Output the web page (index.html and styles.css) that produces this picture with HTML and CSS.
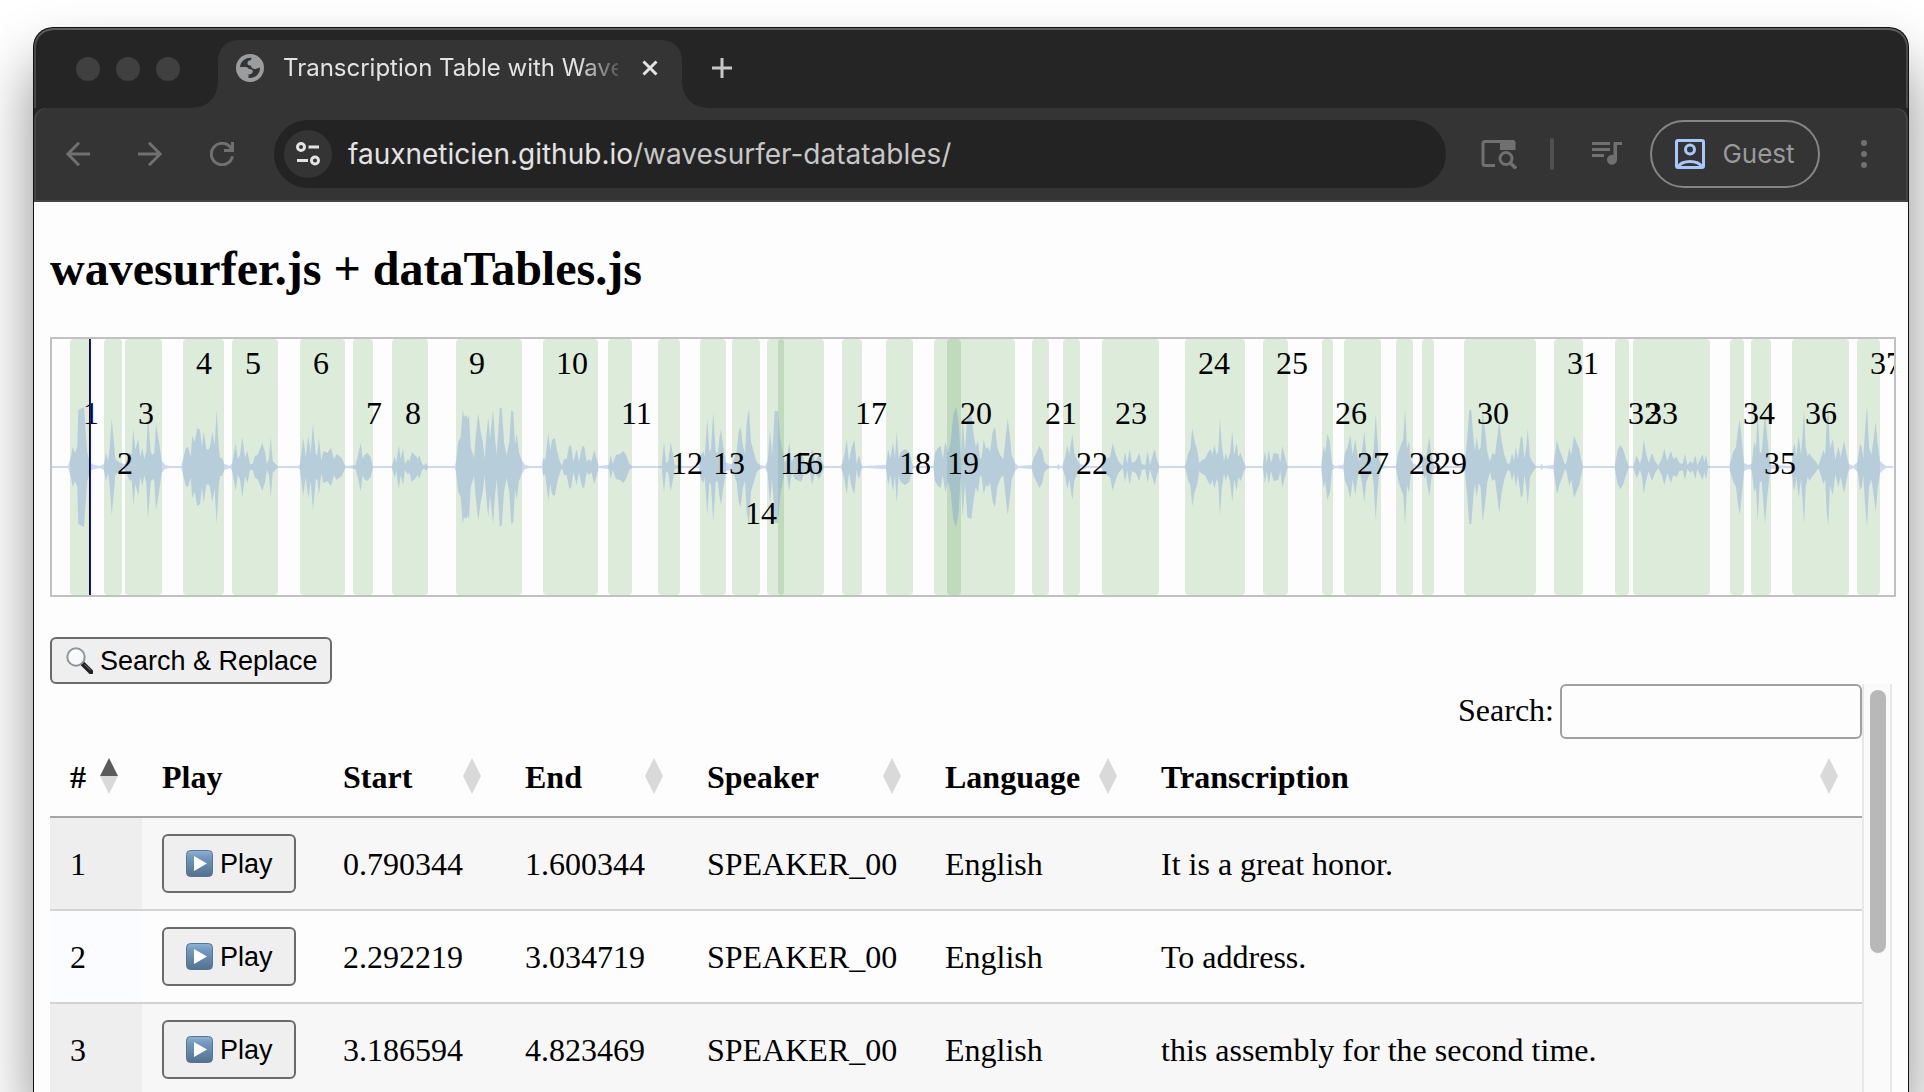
FILE: index.html
```html
<!DOCTYPE html>
<html lang="en">
<head>
<meta charset="utf-8">
<title>Transcription Table with Wavesurfer</title>
<link rel="stylesheet" href="styles.css">
</head>
<body>
<svg class="defs" width="0" height="0" aria-hidden="true">
  <defs>
    <linearGradient id="key-blue" x1="0" y1="0" x2="0" y2="1">
      <stop offset="0" stop-color="#8fb3d8"/><stop offset=".25" stop-color="#7399c0"/><stop offset="1" stop-color="#52718f"/>
    </linearGradient>
    <symbol id="play-key" viewBox="0 0 27 27">
      <rect x=".5" y=".5" width="26" height="26" rx="4" fill="url(#key-blue)" stroke="#5b7590"/>
      <path d="M8 6L21 13.500L8 21z" fill="#fff"/>
    </symbol>
  </defs>
</svg>
<div class="window">
  <header class="tab-strip">
    <span class="lights"><i></i><i></i><i></i></span>
    <div class="tab">
      <svg class="globe" viewBox="0 0 28 28"><circle cx="14" cy="14" r="14" fill="#9a9c9e"/><path fill="#343434" d="M4 13A10.200 10.200 0 0 1 15.500 3.800L15 6Q11.300 6.500 11.500 9.500Q11.600 11.500 15 11.800Q16 15.500 19.500 15L24 13.500A10.200 10.200 0 0 1 12.500 24V20.500Q16.800 20.300 16.800 17.300Q16.600 15 13 15Q12 13 9.500 13z"/></svg>
      <span class="tab-title">Transcription Table with Wavesurfer</span>
      <button class="icon-button close" aria-label="Close tab"><svg viewBox="0 0 16 16"><path d="M1.500 1.500L14.500 14.500M14.500 1.500L1.500 14.500"/></svg></button>
    </div>
    <button class="icon-button new-tab" aria-label="New tab"><svg viewBox="0 0 20 20"><path d="M10 0V20M0 10H20"/></svg></button>
  </header>
  <nav class="toolbar">
    <div class="nav-buttons">
      <button class="icon-button nav" aria-label="Back"><svg viewBox="0 0 24 24"><path d="M24 12H2M13 .8L1.800 12L13 23.200"/></svg></button>
      <button class="icon-button nav" aria-label="Forward"><svg viewBox="0 0 24 24"><path d="M0 12H22M11 .8L22.200 12L11 23.200"/></svg></button>
      <button class="icon-button nav" aria-label="Reload"><svg viewBox="0 0 24 24"><path d="M22.500 14.200A10.700 10.700 0 1 1 20.500 5.500L22 8M22.500 0V8.500H14"/></svg></button>
    </div>
    <div class="omnibox">
      <button class="site-info" aria-label="Site information"><svg viewBox="0 0 24 24"><g fill="none" stroke="#e3e3e3" stroke-width="3"><circle cx="5" cy="5" r="3.500"/><circle cx="19" cy="18.500" r="3.500"/><path d="M12.500 5H23M1 18.500H12"/></g></svg></button>
      <div class="url">fauxneticien.github.io<span>/wavesurfer-datatables/</span></div>
    </div>
    <button class="icon-button tab-search" aria-label="Search this page"><svg viewBox="0 0 36 30"><path fill="none" stroke="currentColor" stroke-width="3" d="M14 26.500H4Q2 26.500 2 24.500V4.500Q2 2.500 4 2.500H31Q33 2.500 33 4.500"/><path fill="currentColor" d="M19 1h12.500q3 0 3 3v7H19z"/><circle cx="25" cy="19.500" r="6" fill="none" stroke="currentColor" stroke-width="3"/><path stroke="currentColor" stroke-width="3.500" d="M29 23.500L35 29.500"/></svg></button>
    <span class="divider"></span>
    <button class="icon-button music" aria-label="Media controls"><svg viewBox="0 0 30 24"><path fill="currentColor" d="M0 0h18v3H0zM0 6h18v3H0zM0 12h12v3H0zM21.500 0H30v3h-5v14.500A5 5 0 1 1 21.500 12.900z"/></svg></button>
    <button class="guest"><svg viewBox="0 0 30 30"><g fill="none" stroke="#a8c7fa" stroke-width="3"><rect x="1.500" y="1.500" width="27" height="27" rx="1.500"/><circle cx="15" cy="10.500" r="4.500"/><path d="M3 28Q6 22.500 15 22.500T27 28"/></g></svg><span>Guest</span></button>
    <button class="icon-button dots" aria-label="Menu"><svg viewBox="0 0 6 28"><g fill="currentColor"><circle cx="3" cy="3" r="3"/><circle cx="3" cy="14" r="3"/><circle cx="3" cy="25" r="3"/></g></svg></button>
  </nav>
  <main>
    <h1>wavesurfer.js + dataTables.js</h1>
    <div class="waveform" id="waveform">
      <svg class="wave" viewBox="0 0 1842 256" preserveAspectRatio="none" aria-hidden="true"><path id="wave-path"/></svg>
      <div class="cursor"></div>
    </div>
    <button class="replace"><svg viewBox="0 0 27 27"><path d="M17 17L25 25" stroke="#222" stroke-width="5" stroke-linecap="round"/><path d="M18.500 17.500L24.500 23" stroke="#777" stroke-width="1"/><circle cx="10" cy="10" r="8.700" fill="#f7f8fa" stroke="#8f959c" stroke-width="2"/><path d="M5 8Q7 4.500 11 4.500" fill="none" stroke="#fff" stroke-width="2"/></svg>Search &amp; Replace</button>
    <section class="scroll-area">
      <div class="table-pane">
        <div class="filter"><label for="search">Search:</label><input id="search" type="search"></div>
        <table>
          <colgroup><col class="c-num"><col class="c-play"><col class="c-time"><col class="c-time"><col class="c-speaker"><col class="c-lang"><col></colgroup>
          <thead>
            <tr><th class="sort asc">#</th><th>Play</th><th class="sort">Start</th><th class="sort">End</th><th class="sort">Speaker</th><th class="sort">Language</th><th class="sort">Transcription</th></tr>
          </thead>
          <tbody>
            <tr><td>1</td><td><button class="play"><svg><use href="#play-key"/></svg>Play</button></td><td>0.790344</td><td>1.600344</td><td>SPEAKER_00</td><td>English</td><td>It is a great honor.</td></tr>
            <tr><td>2</td><td><button class="play"><svg><use href="#play-key"/></svg>Play</button></td><td>2.292219</td><td>3.034719</td><td>SPEAKER_00</td><td>English</td><td>To address.</td></tr>
            <tr><td>3</td><td><button class="play"><svg><use href="#play-key"/></svg>Play</button></td><td>3.186594</td><td>4.823469</td><td>SPEAKER_00</td><td>English</td><td>this assembly for the second time.</td></tr>
          </tbody>
        </table>
      </div>
      <div class="scrollbar"><div class="thumb"></div></div>
    </section>
  </main>
</div>
<script src="wave.js"></script>
</body>
</html>
```
FILE: styles.css
```css
* { box-sizing: border-box; }

body {
  margin: 0;
  height: 100vh;
  overflow: hidden;
  display: flex;
  background: #fff;
  color: #000;
  font: 32px/36px "Liberation Serif", "Times New Roman", serif;
}

button {
  font: 27px/32px "Liberation Sans", Arial, sans-serif;
  color: #000;
  padding: 0;
}

svg { display: block; flex: none; }
.defs { position: absolute; }

.window {
  flex: 1;
  min-width: 0;
  margin: 27px 15px 0 33px;
  border: 1px solid #111;
  border-bottom: 0;
  border-radius: 20px 20px 0 0;
  overflow: hidden;
  background: linear-gradient(#252525 160px, #fdfdfd 160px);
  box-shadow: 0 36px 60px rgba(0, 0, 0, .45);
}

/* Browser chrome */
.tab-strip {
  height: 80px;
  display: flex;
  align-items: flex-end;
  padding-left: 42px;
  background: #252525;
  border-radius: 20px 20px 0 0;
  box-shadow: inset 0 2px #5e5e5e, inset 2px 0 #484848, inset -2px 0 #484848;
}

.lights {
  display: flex;
  gap: 16px;
  margin: 0 38px 27px 0;
}

.lights i {
  width: 24px;
  height: 24px;
  border-radius: 50%;
  background: #404040;
}

.tab {
  position: relative;
  width: 464px;
  height: 68px;
  display: flex;
  align-items: center;
  padding: 0 24px 12px 18px;
  background: #343434;
  border-radius: 20px 20px 0 0;
}

.tab::before,
.tab::after {
  content: "";
  position: absolute;
  bottom: 0;
  width: 24px;
  height: 24px;
}

.tab::before {
  right: 100%;
  background: radial-gradient(circle at 0 0, transparent 23px, #343434 24px);
}

.tab::after {
  left: 100%;
  background: radial-gradient(circle at 100% 0, transparent 23px, #343434 24px);
}

.globe {
  width: 28px;
  height: 28px;
}

.tab-title {
  flex: 1;
  margin: 0 24px 0 19px;
  overflow: hidden;
  white-space: nowrap;
  font: 24px/32px Inter, sans-serif;
  color: #e3e3e3;
  -webkit-mask-image: linear-gradient(90deg, #000 296px, transparent 344px);
  mask-image: linear-gradient(90deg, #000 296px, transparent 344px);
}

.icon-button {
  border: 0;
  background: none;
  color: #707070;
  flex: none;
}

.close svg,
.new-tab svg,
.nav svg {
  fill: none;
  stroke: #e3e3e3;
  stroke-width: 3;
}

.close svg { width: 16px; height: 16px; }
.new-tab { margin: 0 0 30px 30px; }
.new-tab svg { width: 20px; height: 20px; stroke: #c7c7c7; }
.nav svg { width: 24px; height: 24px; stroke: #707070; }

.toolbar {
  height: 94px;
  display: flex;
  align-items: center;
  padding: 0 41px 0 32px;
  background: #343434;
  border-bottom: 2px solid #444;
  border-radius: 12px 12px 0 0;
  box-shadow: inset 2px 0 #444, inset -2px 0 #444;
}

.nav-buttons {
  display: flex;
  gap: 48px;
}

.omnibox {
  flex: 1;
  min-width: 0;
  height: 68px;
  margin: 0 35px 0 40px;
  padding: 0 10px;
  display: flex;
  align-items: center;
  gap: 16px;
  border-radius: 34px;
  background: #232323;
}

.site-info {
  width: 48px;
  height: 48px;
  display: grid;
  place-items: center;
  border: 0;
  border-radius: 50%;
  background: #343434;
}

.site-info svg { width: 24px; height: 24px; }

.url {
  font: 28px/36px Inter, sans-serif;
  color: #e3e3e3;
  white-space: nowrap;
}

.url span { color: #c7c7c7; }

.tab-search svg { width: 36px; height: 30px; }

.divider {
  width: 4px;
  height: 32px;
  margin: 0 38px 0 33px;
  border-radius: 2px;
  background: #505050;
}

.music svg { width: 30px; height: 24px; }

.guest {
  width: 170px;
  height: 68px;
  margin: 0 41px 0 28px;
  display: flex;
  align-items: center;
  justify-content: center;
  gap: 17px;
  border: 2px solid #858585;
  border-radius: 34px;
  background: none;
  color: #9a9a9a;
  font: 26px/32px Inter, sans-serif;
}

.guest svg { width: 30px; height: 30px; }
.dots svg { width: 6px; height: 28px; }

/* Page */
main {
  padding: 39px 16px 0;
  background: #fdfdfd;
}

h1 {
  margin: 0 0 40px;
  font-size: 48px;
  line-height: 56px;
}

.waveform {
  position: relative;
  height: 260px;
  margin-right: -4px;
  margin-bottom: 40px;
  border: 2px solid #c1c1c1;
  overflow: hidden;
}

.region {
  position: absolute;
  top: 0;
  bottom: 0;
  border-radius: 4px;
  background: rgba(20, 125, 5, .14);
  white-space: nowrap;
}

.region span {
  position: relative;
  z-index: 2;
  display: block;
  padding: 6px 0 0 13px;
}

.level-1 { margin-top: 50px; }
.level-2 { margin-top: 100px; }
.level-3 { margin-top: 150px; }

.wave {
  position: absolute;
  inset: 0;
  z-index: 1;
  width: 100%;
  height: 100%;
  fill: rgba(112, 148, 220, .34);
}

.cursor {
  position: absolute;
  top: 0;
  bottom: 0;
  left: 2%;
  z-index: 2;
  width: 2px;
  background: linear-gradient(90deg, #111 50%, #11d 50%);
}

.replace,
.play {
  display: flex;
  align-items: center;
  gap: 7px;
  border: 2px solid #6b6b6b;
  border-radius: 6px;
  background: #efefef;
}

.replace { height: 47px; padding: 0 12px 0 14px; }
.replace svg,
.play svg { width: 27px; height: 27px; }

.scroll-area {
  display: grid;
  grid-template-columns: minmax(0, 1fr) 30px;
}

.filter {
  display: flex;
  align-items: center;
  justify-content: flex-end;
  gap: 6px;
  margin-bottom: 20px;
}

.filter label { margin-bottom: 4px; }

.filter input {
  width: 302px;
  height: 55px;
  padding: 10px;
  border: 2px solid #a0a0a0;
  border-radius: 6px;
  background: transparent;
  font: inherit;
}

table {
  width: 100%;
  table-layout: fixed;
  border-collapse: separate;
  border-spacing: 0;
}

.c-num { width: 92px; }
.c-play { width: 181px; }
.c-time { width: 182px; }
.c-speaker { width: 238px; }
.c-lang { width: 216px; }

th {
  position: relative;
  padding: 0 20px 21px;
  border-bottom: 2px solid #a5a5a5;
  text-align: left;
}

.sort::before,
.sort::after {
  content: "";
  position: absolute;
  right: 24px;
  width: 18px;
  height: 18px;
  background: #d9d9d9;
}

.sort::before { top: -1px; clip-path: polygon(50% 0, 100% 100%, 0 100%); }
.sort::after { top: 17px; clip-path: polygon(0 0, 100% 0, 50% 100%); }
.asc::before { background: #5a5a5a; }

td {
  padding: 16px 20px;
  white-space: nowrap;
}

tr + tr td { border-top: 2px solid #d3d3d3; }
tbody tr:nth-child(odd) td { background: #f7f7f7; }
tbody tr:nth-child(odd) td:first-child { background: #eee; }
tbody tr:nth-child(even) td:first-child { background: #fbfcff; }

.play { height: 59px; padding: 0 21px 0 22px; }

.scrollbar {
  padding: 6px;
  border: solid #e8e8e8;
  border-width: 0 2px;
  background: #fafafa;
}

.thumb {
  width: 16px;
  height: 263px;
  border-radius: 8px;
  background: #b8b8b8;
}
```
FILE: wave.js
```js
// Total track width in drawing units; regions are [start, end, label level].
const WIDTH = 1842;
const REGIONS = [
  [18, 38, 1], [52, 70, 2], [73, 110, 1], [131, 172, 0], [180, 226, 0], [248, 293, 0],
  [301, 321, 1], [340, 376, 1], [404, 470, 0], [491, 546, 0], [556, 580, 1], [606, 628, 2],
  [648, 674, 2], [680, 708, 3], [715, 732, 2], [726, 772, 2], [790, 810, 1], [834, 861, 2],
  [882, 909, 2], [895, 963, 1], [980, 997, 1], [1011, 1028, 2], [1050, 1107, 1], [1133, 1193, 0],
  [1211, 1236, 0], [1270, 1281, 1], [1292, 1329, 2], [1344, 1361, 2], [1370, 1382, 2], [1412, 1484, 1],
  [1502, 1531, 0], [1563, 1577, 1], [1581, 1658, 1], [1678, 1692, 1], [1699, 1719, 2], [1740, 1797, 1],
  [1805, 1828, 0]
];

// Peak envelope: each block has an origin and pairs of third-unit position and amplitude.
const PEAKS = [
  [-22, "66 1 114 1 118 5 122 9 128 20 135 14 142 20 145 57 162 60 166 40 172 14 177 8 185 3 195 2 210 1 222 3 228 14 235 6 240 22 245 48 252 24 256 8 270 4 285 3 300 14 305 12 310 38 316 17 325 28 331 10 337 19 343 8 349 16 354 52 362 15 367 12 373 14 378 43 387 25 395 6 405 2 420 1 453 1 457 5 468 19 474 20 482 10 487 31 494 25 502 39 510 37 516 20 521 36 529 18 535 17 540 20 547 35 554 22 560 57 566 20 570 9 576 9 583 3 600 1 607 4 617 24 623 8 630 12 637 30 645 9 652 16 660 3 668 3 675 11 683 12 690 18 697 24 706 14 710 3 717 8 722 30 728 6 742 1 805 1 810 3 820 29 827 10 835 31 842 14 849 43 857 13 862 12 867 28 874 6 880 16 892 14 903 19 912 8 920 13 935 9 944 2 950 1 977 2 985 13 992 24 998 8 1003 12 1012 14 1022 10 1028 1 1085 1 1088 3 1094 11 1099 4 1106 22 1112 8 1119 18 1125 3 1134 8 1138 5 1145 15 1155 12 1163 8 1168 12 1175 4 1182 1 1188 4 1193 1 1274 1 1278 5 1285 25 1292 30 1298 57 1302 50 1309 52 1313 48 1317 52 1322 20 1332 9 1337 30 1345 54 1352 35 1358 25 1364 8 1370 35 1375 50 1380 28 1389 57 1395 28 1400 12 1405 35 1409 59 1415 59 1422 25 1430 11 1438 25 1444 57 1450 55 1455 22 1460 33 1467 14 1475 7 1485 2 1500 1"],
  [448, "125 1 130 9 136 7 145 34 151 16 156 27 164 29 172 15 180 5 186 1 192 8 200 8 208 22 214 20 220 5 230 18 237 5 247 21 253 20 260 5 268 8 274 5 283 17 290 8 296 1 327 2 332 12 338 3 348 12 360 13 370 16 378 12 388 3 396 1 485 1 492 25 498 4 505 6 512 25 520 10 524 2 540 1 596 1 603 12 610 16 614 10 622 48 628 15 633 18 640 55 647 15 653 14 658 28 663 38 670 20 678 4 695 3 702 8 710 15 716 35 722 40 728 22 735 13 740 45 747 58 753 25 762 14 770 5 780 2 795 1 803 6 810 36 816 12 820 30 824 56 834 56 840 30 848 15 855 4 860 8 868 24 875 5 885 12 903 15 915 4 930 5 936 18 945 6 958 12 968 4 972 1 1022 1 1026 3 1033 12 1040 27 1047 5 1055 20 1063 27 1070 3 1077 12 1084 2 1090 1 1158 2 1165 18 1171 8 1179 24 1185 8 1190 36 1196 8 1202 15 1215 18 1228 15 1237 3 1240 1 1300 1 1305 14 1314 19 1322 21 1328 8 1336 25 1344 14 1352 25 1360 52 1368 60 1376 45 1382 8 1388 50 1395 16 1402 50 1414 52 1420 35 1427 20 1434 26 1440 8 1445 10 1451 27 1458 18 1464 20 1470 15 1478 35 1485 40 1492 20"],
  [908, "120 12 130 8 137 30 143 48 150 30 155 12 165 4 175 1 215 2 222 10 230 15 238 21 247 16 253 5 262 2 270 1 290 1 295 3 300 1 307 1 310 4 316 10 322 22 328 12 337 33 343 14 350 8 360 3 372 2 380 1 424 1 427 4 440 8 450 10 458 24 466 14 475 6 488 1 495 15 502 3 509 18 516 4 527 6 538 14 545 3 556 2 563 16 570 2 576 9 584 18 592 6 598 1 673 1 677 2 684 13 691 18 697 39 704 25 711 18 718 4 726 7 735 8 745 15 752 18 757 12 763 22 770 12 775 16 780 48 785 22 792 6 797 14 803 7 810 14 817 35 823 12 830 24 835 10 842 14 852 4 858 1 908 1 915 16 920 4 926 17 933 4 941 14 955 13 961 4 967 21 975 10 982 1 1083 1 1091 21 1096 14 1102 33 1110 25 1116 3 1125 1 1150 2 1155 14 1163 20 1171 32 1178 12 1186 28 1193 10 1200 6 1205 14 1213 35 1219 15 1228 8 1236 6 1241 18 1247 53 1252 28 1257 8 1262 2 1285 1 1308 1 1315 14 1325 24 1330 28 1335 58 1341 18 1347 26 1352 8 1360 3 1385 1 1393 12 1397 8 1403 20 1408 30 1414 12 1420 2 1430 1"],
  [1388, "70 1 75 4 82 30 88 57 94 57 100 30 105 16 110 30 116 16 122 20 128 55 134 40 142 15 150 5 157 14 165 12 172 30 178 46 184 28 193 12 203 3 210 4 216 14 222 6 228 20 233 8 238 18 243 31 248 28 253 8 259 20 263 38 270 10 278 5 287 1 300 1 305 3 310 1 340 2 345 12 351 27 358 18 367 10 375 2 380 5 388 19 394 12 402 31 410 24 418 18 427 2 430 1 524 1 533 17 541 22 549 18 558 8 566 1 580 1 590 11 600 3 606 10 611 27 618 14 626 4 636 14 645 6 655 1 665 8 673 18 682 6 693 16 700 8 710 10 718 4 728 3 735 13 742 2 752 6 758 3 766 12 772 2 788 13 793 5 798 12 804 1 868 1 880 15 888 20 893 35 899 48 905 28 912 4 925 2 935 3 943 25 948 20 953 54 959 15 965 14 970 35 975 56 981 32 988 10 994 2 1050 1 1055 2 1060 20 1064 23 1069 10 1076 31 1083 12 1088 35 1092 57 1097 20 1103 10 1108 14 1115 10 1128 5 1135 1 1142 8 1150 17 1156 12 1160 45 1165 58 1170 18 1178 28 1186 7 1195 20 1202 10 1212 26 1220 12 1226 3 1240 1 1253 5 1260 23 1265 20 1270 8 1276 40 1281 60 1287 20 1294 12 1300 25 1307 45 1313 22 1320 6 1330 3 1338 1 1360 1"]
];

const waveform = document.getElementById("waveform");
const wave = waveform.querySelector(".wave");

REGIONS.forEach(([start, end, level], i) => {
  const region = document.createElement("div");
  region.className = "region";
  region.style.left = (start / WIDTH * 100) + "%";
  region.style.width = ((end - start) / WIDTH * 100) + "%";
  const label = document.createElement("span");
  label.className = "level-" + level;
  label.textContent = i + 1;
  region.append(label);
  waveform.insertBefore(region, wave);
});

const upper = [];
const lower = [];
PEAKS.forEach(([origin, text]) => {
  const n = text.split(" ").map(Number);
  for (let i = 0; i < n.length; i += 2) {
    const x = (origin + n[i] / 3).toFixed(1);
    upper.push(x + " " + (128 - n[i + 1]));
    lower.unshift(x + " " + (128 + n[i + 1]));
  }
});
document.getElementById("wave-path").setAttribute("d", "M" + upper.concat(lower).join("L") + "Z");
```
